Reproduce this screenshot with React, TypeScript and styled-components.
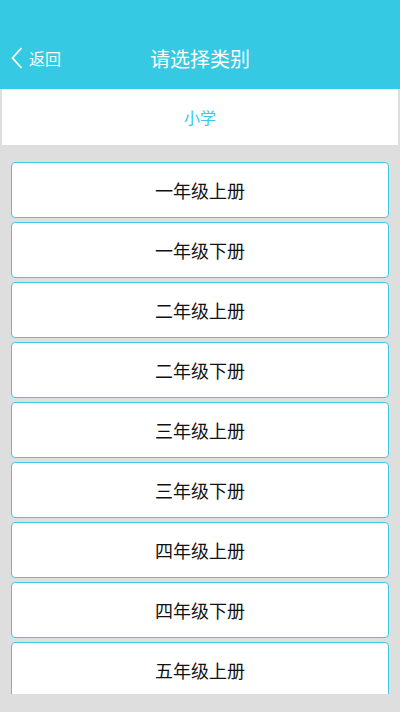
import React from 'react';
import styled, { createGlobalStyle } from 'styled-components';

const grades = [
  '一年级上册',
  '一年级下册',
  '二年级上册',
  '二年级下册',
  '三年级上册',
  '三年级下册',
  '四年级上册',
  '四年级下册',
  '五年级上册',
];

const GlobalStyle = createGlobalStyle`
  html, body {
    margin: 0;
    padding: 0;
    background: #DEDEDE;
    font-family: "Noto Sans CJK SC", "Noto Sans", sans-serif;
  }
`;

const App: React.FC = () => {
  return (
    <S.Page>
      <GlobalStyle />
      <S.Header>
        <S.NavBar>
          <S.BackButton>
            <svg width="12" height="22" viewBox="0 0 12 22">
              <path d="M10.5 1 L1.5 11 L10.5 21" fill="none" stroke="#fff" strokeWidth="1.8" />
            </svg>
            <span>返回</span>
          </S.BackButton>
          <S.Title>请选择类别</S.Title>
        </S.NavBar>
      </S.Header>

      <S.TabBar>
        <S.Tab>小学</S.Tab>
      </S.TabBar>

      <S.List>
        {grades.map(g => (
          <S.Card key={g}>{g}</S.Card>
        ))}
      </S.List>
    </S.Page>
  );
};

const S = {
  Page: styled.div`
    width: 400px;
    height: 712px;
    display: flex;
    flex-direction: column;
    background: #DEDEDE;
  `,
  Header: styled.header`
    height: 89px;
    background: #36C9E3;
    display: flex;
    flex-direction: column;
    justify-content: flex-end;
    flex-shrink: 0;
  `,
  NavBar: styled.div`
    position: relative;
    height: 62px;
    display: flex;
    align-items: center;
    justify-content: center;
  `,
  BackButton: styled.div`
    position: absolute;
    left: 11px;
    top: 0;
    bottom: 0;
    display: flex;
    align-items: center;
    gap: 6px;
    color: #fff;
    font-size: 16px;
    padding-bottom: 1px;
  `,
  Title: styled.h1`
    margin: 0;
    font-size: 20px;
    font-weight: 400;
    color: #fff;
  `,
  TabBar: styled.div`
    height: 56px;
    margin: 0 2px;
    background: #fff;
    display: flex;
    align-items: center;
    justify-content: center;
    flex-shrink: 0;
  `,
  Tab: styled.span`
    font-size: 16px;
    color: #36C9E3;
  `,
  List: styled.div`
    flex: 1;
    overflow: hidden;
    margin-bottom: 18px;
    padding: 17px 11px 0;
    display: flex;
    flex-direction: column;
    gap: 4px;
  `,
  Card: styled.div`
    height: 56px;
    box-sizing: border-box;
    flex-shrink: 0;
    background: #fff;
    border: 1px solid #3ACBE5;
    border-radius: 4px;
    display: flex;
    align-items: center;
    justify-content: center;
    font-size: 18px;
    color: #111;
  `,
};

export default App;
